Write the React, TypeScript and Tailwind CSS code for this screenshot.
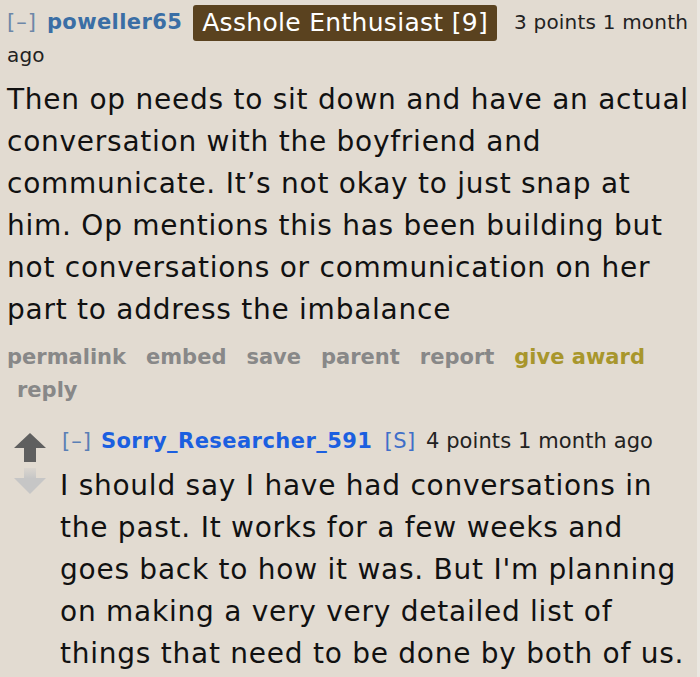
export default function App() {
  const font = { fontFamily: '"DejaVu Sans", Verdana, sans-serif' };
  return (
    <div className="w-[700px] h-[677px] bg-[#e2dbd1] overflow-hidden text-[#111] border-r-[3px] border-[#ebe7e1]" style={font}>
      <div className="pl-[7px]">
        <div className="pt-[6px] text-[21px] leading-[33px]">
          <span className="text-[#6d87a8] tracking-[1px]">[–]</span>
          <span className="font-bold text-[#3a6ea5] ml-[10px] tracking-[0.4px]">poweller65</span>
          <span className="inline-block align-middle -my-[2px] ml-[11px] mr-[17px] bg-[#5a421f] text-white text-[25px] leading-[36px] px-[9px] rounded-[3px] tracking-[0.3px]">Asshole Enthusiast [9]</span>
          <span className="text-[#222] text-[20px] tracking-[0.2px]">3 points 1 month ago</span>
        </div>
        <div className="mt-[7px] text-[28px] leading-[42px] text-[#111] tracking-[0.75px] pr-[4px]">
          Then op needs to sit down and have an actual conversation with the boyfriend and communicate. It’s not okay to just snap at him. Op mentions this has been building but not conversations or communication on her part to address the imbalance
        </div>
        <div className="mt-[10px] text-[21px] leading-[33px] font-bold text-[#888]">
          <span className="mr-[20px]">permalink</span>
          <span className="mr-[20px]">embed</span>
          <span className="mr-[20px]">save</span>
          <span className="mr-[20px]">parent</span>
          <span className="mr-[20px]">report</span>
          <span className="text-[#a8962c]">give award</span>
          <div className="pl-[10px]">reply</div>
        </div>
        <div className="mt-[16px] flex pr-[4px]">
          <div className="w-[53px] shrink-0 pl-[7px] pt-[10px]">
            <svg width="32" height="62" viewBox="0 0 32 62">
              <defs>
                <linearGradient id="dg" x1="0" y1="0" x2="0" y2="1">
                  <stop offset="0" stopColor="#c8c8c8" stopOpacity="0.3" />
                  <stop offset="0.4" stopColor="#c6c6c6" />
                  <stop offset="1" stopColor="#c6c6c6" />
                </linearGradient>
              </defs>
              <path d="M16 0 L32 15 L22 15 L22 29 L10 29 L10 15 L0 15 Z" fill="#5f5f5f" />
              <path d="M10 35 L22 35 L22 45 L32 45 L16 61 L0 45 L10 45 Z" fill="url(#dg)" />
            </svg>
          </div>
          <div className="flex-1">
            <div className="text-[21px] leading-[36px]">
              <span className="text-[#5a7fb5] tracking-[1px] ml-[2px]">[–]</span>
              <span className="font-bold text-[#1b5fe0] ml-[9px] tracking-[0.45px]">Sorry_Researcher_591</span>
              <span className="text-[#3f6fc8] ml-[12px] tracking-[0.6px]">[S]</span>
              <span className="text-[#222] ml-[10px] tracking-[0.1px]">4 points 1 month ago</span>
            </div>
            <div className="mt-[6px] text-[28px] leading-[42px] text-[#111] tracking-[0.75px]">
              I should say I have had conversations in the past. It works for a few weeks and goes back to how it was. But I'm planning on making a very very detailed list of things that need to be done by both of us.
            </div>
          </div>
        </div>
      </div>
    </div>
  );
}
